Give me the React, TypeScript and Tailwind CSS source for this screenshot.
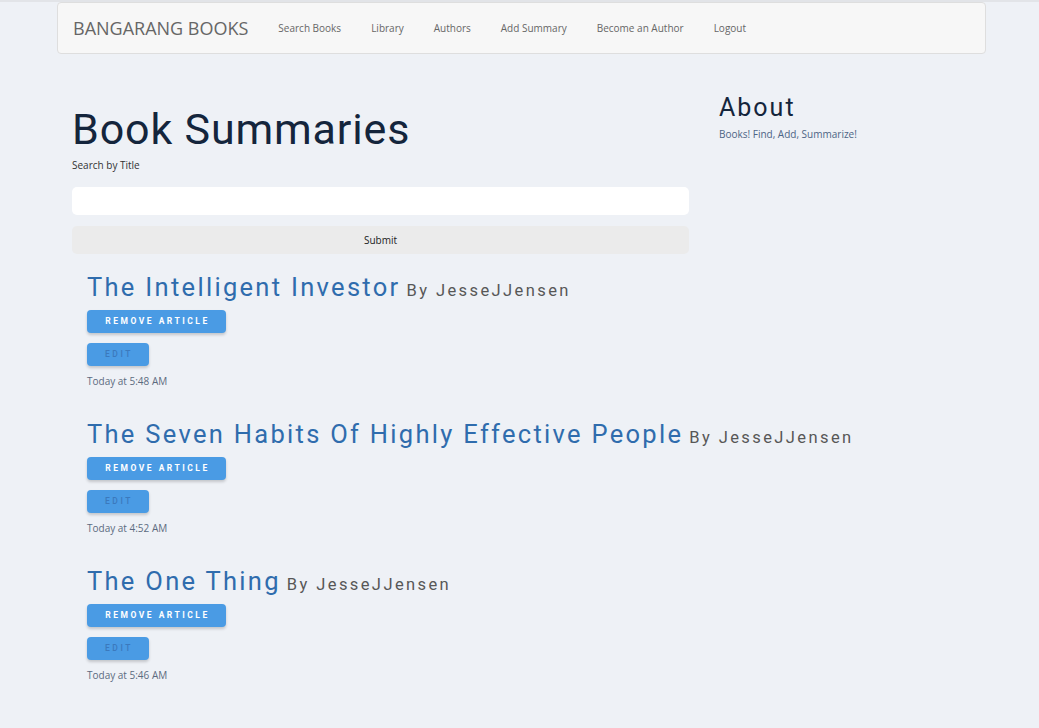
import React from "react";

const articles = [
  { title: "The Intelligent Investor", date: "Today at 5:48 AM" },
  { title: "The Seven Habits Of Highly Effective People", date: "Today at 4:52 AM" },
  { title: "The One Thing", date: "Today at 5:46 AM" },
];

const links = ["Search Books", "Library", "Authors", "Add Summary", "Become an Author", "Logout"];

export default function App() {
  return (
    <div className="min-h-[728px] w-full bg-[#eef1f6] border-t-2 border-[#e2e4e8] font-['Open_Sans',sans-serif]">
      <nav className="mx-[57px] w-[929px] h-[52px] bg-[#f7f7f7] border border-[#dedede] rounded-[4px] flex items-center pl-[15px]">
        <span className="text-[18px] text-[#666] tracking-[0px] mr-[15px]">BANGARANG BOOKS</span>
        {links.map((l) => (
          <span key={l} className="px-[15px] text-[10px] text-[#666]">{l}</span>
        ))}
      </nav>
      <div className="flex pl-[72px] pt-[48px]">
        <main className="w-[617px]">
          <h1 className="font-['Roboto',sans-serif] text-[43px] leading-[54px] tracking-[0.85px] text-[#14253c]">Book Summaries</h1>
          <div className="text-[10px] text-[#333] mt-[2px] leading-[14px]">Search by Title</div>
          <div className="mt-[15px] h-[28px] bg-white rounded-[5px]" />
          <div className="mt-[11px] h-[28px] bg-[#ebebeb] rounded-[5px] flex items-center justify-center text-[10px] text-[#222]">Submit</div>
          <div className="pl-[15px] mt-[16px]">
            {articles.map((a) => (
              <div key={a.title} className="h-[147px]">
                <div className="whitespace-nowrap font-['Roboto',sans-serif] leading-[34px]">
                  <span className="text-[25.5px] tracking-[2.3px] text-[#2f6cad] mr-[6px]">{a.title}</span>
                  <span className="text-[16.5px] tracking-[2.4px] text-[#575757]">By JesseJJensen</span>
                </div>
                <button className="mt-[2px] block w-[139px] h-[23px] rounded-[4px] bg-[#4a9be4] shadow-[0_2px_3px_rgba(0,0,0,0.18)] text-white font-['Roboto',sans-serif] font-bold text-[8.5px] tracking-[2.5px] pl-[2px]">REMOVE ARTICLE</button>
                <button className="mt-[10px] block w-[62px] h-[23px] rounded-[4px] bg-[#4a9be4] shadow-[0_2px_3px_rgba(0,0,0,0.18)] text-[#3b79bd] font-['Roboto',sans-serif] font-medium text-[8.5px] tracking-[2.6px] pl-[2px]">EDIT</button>
                <div className="mt-[8px] text-[10px] text-[#5c6b80]">{a.date}</div>
              </div>
            ))}
          </div>
        </main>
        <aside className="ml-[30px] -mt-[11px]">
          <h2 className="font-['Roboto',sans-serif] text-[25px] leading-[34px] tracking-[2px] text-[#14253c]">About</h2>
          <div className="text-[10px] text-[#4d6585] mt-[2px]">Books! Find, Add, Summarize!</div>
        </aside>
      </div>
    </div>
  );
}
